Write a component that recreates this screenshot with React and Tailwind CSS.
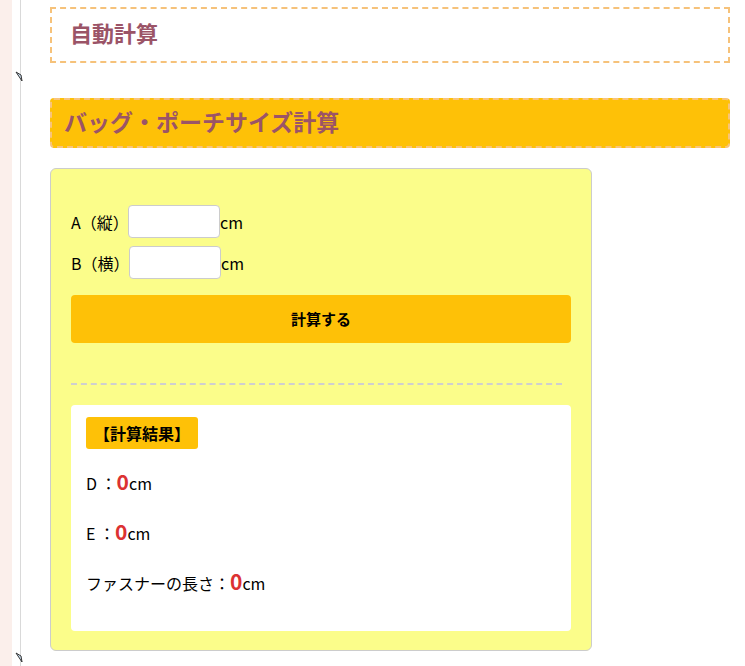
import React, { useState } from 'react';

const FONT = { fontFamily: '"Noto Sans CJK JP", sans-serif' };

function Marker({ className }) {
  return (
    <svg className={className} width="8" height="12" viewBox="0 0 8 12">
      <path d="M1 2 L6 5 L7 11 Z" fill="#cfe3f5" stroke="#333" strokeWidth="1" />
    </svg>
  );
}

function ResultRow({ label }) {
  return (
    <p className="mt-[18px] h-[32px] leading-[32px] text-[16px] whitespace-pre">
      {label}：<span className="text-[21px] font-bold text-[#dc3232]">0</span>cm
    </p>
  );
}

export default function App() {
  const [a, setA] = useState('');
  const [b, setB] = useState('');

  return (
    <div className="flex min-h-[666px] bg-white text-black" style={FONT}>
      {/* side rail */}
      <div className="relative w-[21px] shrink-0 flex">
        <div className="w-[12px] bg-[#fbefeb]" />
        <div className="w-[8px] bg-white" />
        <div className="w-px bg-[#d9d9d9]" />
        <Marker className="absolute left-[15px] top-[70px]" />
        <Marker className="absolute left-[15px] top-[651px]" />
      </div>

      <main className="flex-1 pl-[29px] pr-[15px] pt-[7px]">
        <div className="border-2 border-dashed border-[#f6c27a] h-[56px] flex items-center px-[18px] pb-[5px]">
          <h2 className="text-[22px] font-bold text-[#9b5467]">自動計算</h2>
        </div>

        <div className="mt-[35px] bg-[#fec107] border-2 border-dashed border-[#f8c47c] rounded-[4px] h-[50px] flex items-center px-[12px] pb-[4px]">
          <h3 className="text-[23px] font-bold text-[#9b5467]">バッグ・ポーチサイズ計算</h3>
        </div>

        <div className="mt-[20px] w-[542px] bg-[#fbfd8a] border border-[#cccccc] rounded-[6px] px-[20px] pt-[36px] pb-[19px]">
          <div className="flex items-center h-[33px] text-[16px]">
            <span className="w-[57px] whitespace-nowrap">A（縦）</span>
            <input
              value={a}
              onChange={(e) => setA(e.target.value)}
              className="w-[92px] h-[33px] bg-white border border-[#cccccc] rounded-[4px] px-2 outline-none"
            />
            <span>cm</span>
          </div>
          <div className="flex items-center h-[33px] mt-[8px] text-[16px]">
            <span className="w-[58px] whitespace-nowrap">B（横）</span>
            <input
              value={b}
              onChange={(e) => setB(e.target.value)}
              className="w-[92px] h-[33px] bg-white border border-[#cccccc] rounded-[4px] px-2 outline-none"
            />
            <span>cm</span>
          </div>

          <button className="mt-[16px] w-full h-[48px] bg-[#fec107] rounded-[4px] text-[15px] font-bold">
            計算する
          </button>

          <div className="mt-[40px] mr-[9px] border-t-2 border-dashed border-[#cfcfcf]" />

          <div className="mt-[20px] bg-white rounded-[4px] px-[15px] pt-[12px] pb-[34px]">
            <div className="inline-flex items-center justify-center w-[112px] h-[32px] bg-[#fec107] rounded-[3px] text-[16px] font-bold">
              【計算結果】
            </div>
            <div className="-mt-[2px]">
              <ResultRow label="D " />
              <ResultRow label="E " />
              <ResultRow label="ファスナーの長さ" />
            </div>
          </div>
        </div>
      </main>
    </div>
  );
}
